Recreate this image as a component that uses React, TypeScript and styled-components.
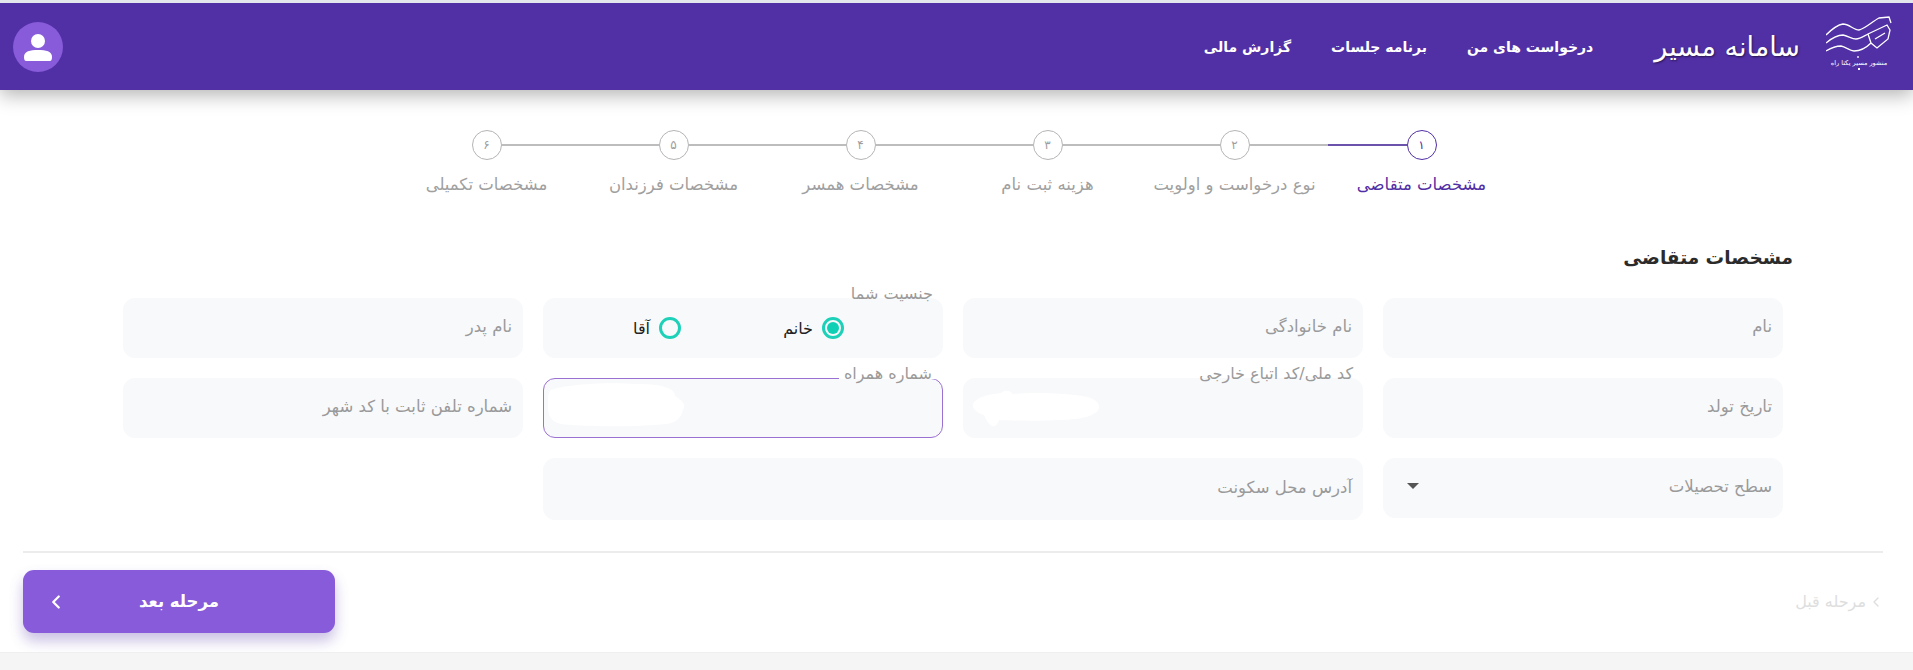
import React from 'react';
import styled, { createGlobalStyle } from 'styled-components';
import { ChevronLeft } from 'lucide-react';

const GlobalStyle = createGlobalStyle`
  html, body {
    margin: 0;
    padding: 0;
    background: #fff;
    overflow: hidden;
  }
  * {
    box-sizing: border-box;
  }
`;

const Page = styled.div`
  direction: rtl;
  width: 1913px;
  height: 670px;
  display: flex;
  flex-direction: column;
  overflow: hidden;
  font-family: 'DejaVu Sans', 'Noto Sans', sans-serif;
  border-top: 3px solid #e4e6ee;
`;

const Header = styled.header`
  flex: 0 0 87px;
  display: flex;
  align-items: center;
  padding: 0 21px 0 13px;
  background: #512fa5;
  box-shadow: 0 5px 18px rgba(0, 0, 0, 0.3);
  color: #fff;
  position: relative;
`;

const Logo = styled.div`
  width: 66px;
  margin-bottom: 8px;
  display: flex;
  flex-direction: column;
  align-items: center;
`;

const LogoCaption = styled.span`
  font-size: 6.5px;
  line-height: 7px;
  white-space: nowrap;
`;

const LogoDot = styled.span`
  width: 2px;
  height: 2px;
  margin-top: 1px;
  background: #fff;
`;

const Brand = styled.div`
  margin-right: 26px;
  font-size: 27px;
  font-weight: 400;
  white-space: nowrap;
  text-shadow: 1px 1px 2px rgba(0, 0, 0, 0.5);
`;

const Nav = styled.nav`
  display: flex;
  gap: 40px;
  margin-right: 61px;
`;

const NavLink = styled.a`
  font-size: 14px;
  font-weight: 700;
  color: #fff;
  white-space: nowrap;
`;

const Avatar = styled.div`
  margin-right: auto;
  width: 50px;
  height: 50px;
  border-radius: 50%;
  background: #875bd9;
  display: flex;
  align-items: center;
  justify-content: center;
`;

const Stepper = styled.div`
  display: flex;
  justify-content: center;
  margin-top: 40px;
  padding-right: 5px;
`;

const Step = styled.div`
  width: 187px;
  display: flex;
  flex-direction: column;
  align-items: center;
`;

const StepTrack = styled.div`
  width: 100%;
  display: flex;
  align-items: center;
`;

const StepLine = styled.span<{ $state: 'none' | 'idle' | 'active' }>`
  flex: 1;
  height: 2px;
  background: ${(p) =>
    p.$state === 'none' ? 'transparent' : p.$state === 'active' ? '#6a52ad' : '#bdbdbd'};
`;

const StepCircle = styled.span<{ $active: boolean }>`
  flex: 0 0 30px;
  height: 30px;
  border-radius: 50%;
  border: 1.5px solid ${(p) => (p.$active ? '#512fa5' : '#b5b5b5')};
  color: ${(p) => (p.$active ? '#512fa5' : '#9e9e9e')};
  display: flex;
  align-items: center;
  justify-content: center;
  font-size: 12px;
`;

const StepLabel = styled.span<{ $active: boolean }>`
  margin-top: 15px;
  font-size: 16.5px;
  line-height: 20px;
  white-space: nowrap;
  color: ${(p) => (p.$active ? '#512fa5' : '#a0a0a0')};
`;

const Title = styled.h2`
  margin: 48px 120px 0 0;
  font-size: 18.5px;
  line-height: 30px;
  font-weight: 700;
  color: #2b2b2b;
`;

const FormGrid = styled.div`
  display: grid;
  grid-template-columns: repeat(4, 400px);
  grid-auto-rows: 60px;
  gap: 20px;
  margin: 25px 130px 0 0;
`;

const Field = styled.div<{ $span?: number; $focused?: boolean; $tall?: boolean }>`
  position: relative;
  grid-column: span ${(p) => p.$span || 1};
  height: ${(p) => (p.$tall ? '62px' : '60px')};
  display: flex;
  align-items: center;
  justify-content: space-between;
  padding: 0 10px 4px;
  background: #f8f9fb;
  border-radius: 12px;
  border: 1px solid ${(p) => (p.$focused ? '#9a70d2' : '#f8f9fb')};
  font-size: 16.5px;
  color: #9a9a9a;
`;

const FloatingLabel = styled.span<{ $notch?: boolean }>`
  position: absolute;
  top: -14px;
  right: ${(p) => (p.$notch ? '5px' : '9px')};
  padding: 0 ${(p) => (p.$notch ? '5px' : '0')};
  font-size: 16px;
  line-height: 18px;
  color: #9a9a9a;
  white-space: nowrap;
  background: ${(p) => (p.$notch ? 'linear-gradient(#fff 80%, transparent 80%)' : 'transparent')};
`;

const RadioGroup = styled.div`
  flex: 1;
  display: flex;
  margin-top: 4px;
  padding: 0 88px 0 0;
  gap: 118px;
`;

const RadioOption = styled.label`
  display: flex;
  align-items: center;
  gap: 9px;
  width: 45px;
  font-size: 16px;
  color: #222;
  white-space: nowrap;
`;

const RadioMark = styled.span<{ $checked?: boolean }>`
  flex: 0 0 22px;
  height: 22px;
  border-radius: 50%;
  border: 3px solid #1dd1b8;
  display: flex;
  align-items: center;
  justify-content: center;
  &::after {
    content: '';
    width: 12px;
    height: 12px;
    border-radius: 50%;
    background: ${(p) => (p.$checked ? '#0fd0b5' : 'transparent')};
  }
`;

const Redaction = styled.svg<{ $left: number; $top: number }>`
  position: absolute;
  left: ${(p) => p.$left}px;
  top: ${(p) => p.$top}px;
`;

const Caret = styled.span`
  width: 0;
  height: 0;
  margin-left: 13px;
  border-left: 6px solid transparent;
  border-right: 6px solid transparent;
  border-top: 6px solid #555;
`;

const Divider = styled.hr`
  width: 1860px;
  height: 2px;
  margin: 33px 30px 0 0;
  border: 0;
  background: #ececec;
`;

const Footer = styled.div`
  display: flex;
  align-items: center;
  justify-content: space-between;
  margin-top: 17px;
  padding: 0 29px 0 23px;
`;

const PrevButton = styled.button`
  display: flex;
  align-items: center;
  gap: 2px;
  padding: 0;
  border: 0;
  background: transparent;
  color: #dedede;
  font-family: inherit;
  font-size: 16px;
`;

const NextButton = styled.button`
  width: 312px;
  height: 63px;
  display: grid;
  grid-template-columns: 1fr auto 1fr;
  align-items: center;
  padding: 0 22px;
  border: 0;
  border-radius: 11px;
  background: #875bd9;
  box-shadow: 0 8px 14px rgba(81, 47, 165, 0.3);
  color: #fff;
  font-family: inherit;
  font-size: 16.5px;
  font-weight: 700;
`;

const NextIcon = styled(ChevronLeft)`
  justify-self: end;
`;

const BottomBand = styled.div`
  flex: 1;
  margin-top: 19px;
  background: #f5f5f5;
  border-top: 1px solid #efefef;
`;

const steps = [
  { num: '۱', label: 'مشخصات متقاضی' },
  { num: '۲', label: 'نوع درخواست و اولویت' },
  { num: '۳', label: 'هزینه ثبت نام' },
  { num: '۴', label: 'مشخصات همسر' },
  { num: '۵', label: 'مشخصات فرزندان' },
  { num: '۶', label: 'مشخصات تکمیلی' },
];

const navItems = ['درخواست های من', 'برنامه جلسات', 'گزارش مالی'];

const LogoMark = () => (
  <svg width="66" height="44" viewBox="0 0 66 44" fill="none" stroke="#fff" strokeWidth="1.3">
    <path d="M0 19 C6 13 11 9 17 8 C23 8 28 14 33 14 C39 13 47 5 53 2 L63 1 L65 7" />
    <path d="M0 27 C6 22 11 19 17 19 C22 20 26 23 30 23 C34 23 38 20 42 18 L61 9 L64 14 L62 23 L51 32 L45 27 L42 18" />
    <path d="M0 35 C5 32 10 30 15 30 C20 31 24 35 28 35 C33 35 40 32 45 27" />
    <path d="M49 23 L59 17" />
    <path d="M32 40 V42" />
  </svg>
);

const UserIcon = () => (
  <svg width="30" height="30" viewBox="0 0 30 30" fill="#fff">
    <circle cx="15" cy="9" r="7" />
    <path d="M1 25 C1 19 7 18 15 18 C23 18 29 19 29 25 C29 28 28 29 27 29 H3 C2 29 1 28 1 25 Z" />
  </svg>
);

const App = () => (
  <Page>
    <GlobalStyle />
    <Header>
      <Logo>
        <LogoMark />
        <LogoCaption>منشور مسیر یکتا راه</LogoCaption>
        <LogoDot />
      </Logo>
      <Brand>سامانه مسیر</Brand>
      <Nav>
        {navItems.map((item) => (
          <NavLink key={item}>{item}</NavLink>
        ))}
      </Nav>
      <Avatar>
        <UserIcon />
      </Avatar>
    </Header>

    <Stepper>
      {steps.map((step, index) => (
        <Step key={step.num}>
          <StepTrack>
            <StepLine $state={index === 0 ? 'none' : 'idle'} />
            <StepCircle $active={index === 0}>{step.num}</StepCircle>
            <StepLine $state={index === 5 ? 'none' : index === 0 ? 'active' : 'idle'} />
          </StepTrack>
          <StepLabel $active={index === 0}>{step.label}</StepLabel>
        </Step>
      ))}
    </Stepper>

    <Title>مشخصات متقاضی</Title>

    <FormGrid>
      <Field>نام</Field>
      <Field>نام خانوادگی</Field>
      <Field>
        <FloatingLabel>جنسیت شما</FloatingLabel>
        <RadioGroup>
          <RadioOption>
            <RadioMark $checked />
            خانم
          </RadioOption>
          <RadioOption>
            <RadioMark />
            آقا
          </RadioOption>
        </RadioGroup>
      </Field>
      <Field>نام پدر</Field>

      <Field>تاریخ تولد</Field>
      <Field>
        <Redaction $left={8} $top={10} width="128" height="38" viewBox="0 0 128 38" fill="#fff">
          <path d="M1 15 C4 8 18 5 29 4 C34 0 38 2 41 5 C60 3 92 4 110 7 C122 9 127 13 127 18 C127 26 112 30 90 31 C70 32 45 32 27 31 C26 35 23 38 20 37 C16 35 14 30 12 26 C5 24 0 20 1 15 Z" />
        </Redaction>
        <FloatingLabel>کد ملی/کد اتباع خارجی</FloatingLabel>
      </Field>
      <Field $focused>
        <FloatingLabel $notch>شماره همراه</FloatingLabel>
        <Redaction $left={3} $top={3} width="140" height="46" viewBox="0 0 140 46" fill="#fff">
          <path d="M4 8 C20 2 60 0 90 2 C120 2 128 8 128 14 C134 18 140 22 136 28 C134 34 132 40 120 42 C80 46 30 44 14 42 C4 40 1 34 1 24 C1 16 1 10 4 8 Z" />
        </Redaction>
      </Field>
      <Field>شماره تلفن ثابت با کد شهر</Field>

      <Field>
        سطح تحصیلات
        <Caret />
      </Field>
      <Field $span={2} $tall>
        آدرس محل سکونت
      </Field>
    </FormGrid>

    <Divider />

    <Footer>
      <PrevButton>
        <ChevronLeft size={16} strokeWidth={2} />
        مرحله قبل
      </PrevButton>
      <NextButton>
        <span />
        مرحله بعد
        <NextIcon size={22} strokeWidth={2.5} />
      </NextButton>
    </Footer>

    <BottomBand />
  </Page>
);

export default App;
